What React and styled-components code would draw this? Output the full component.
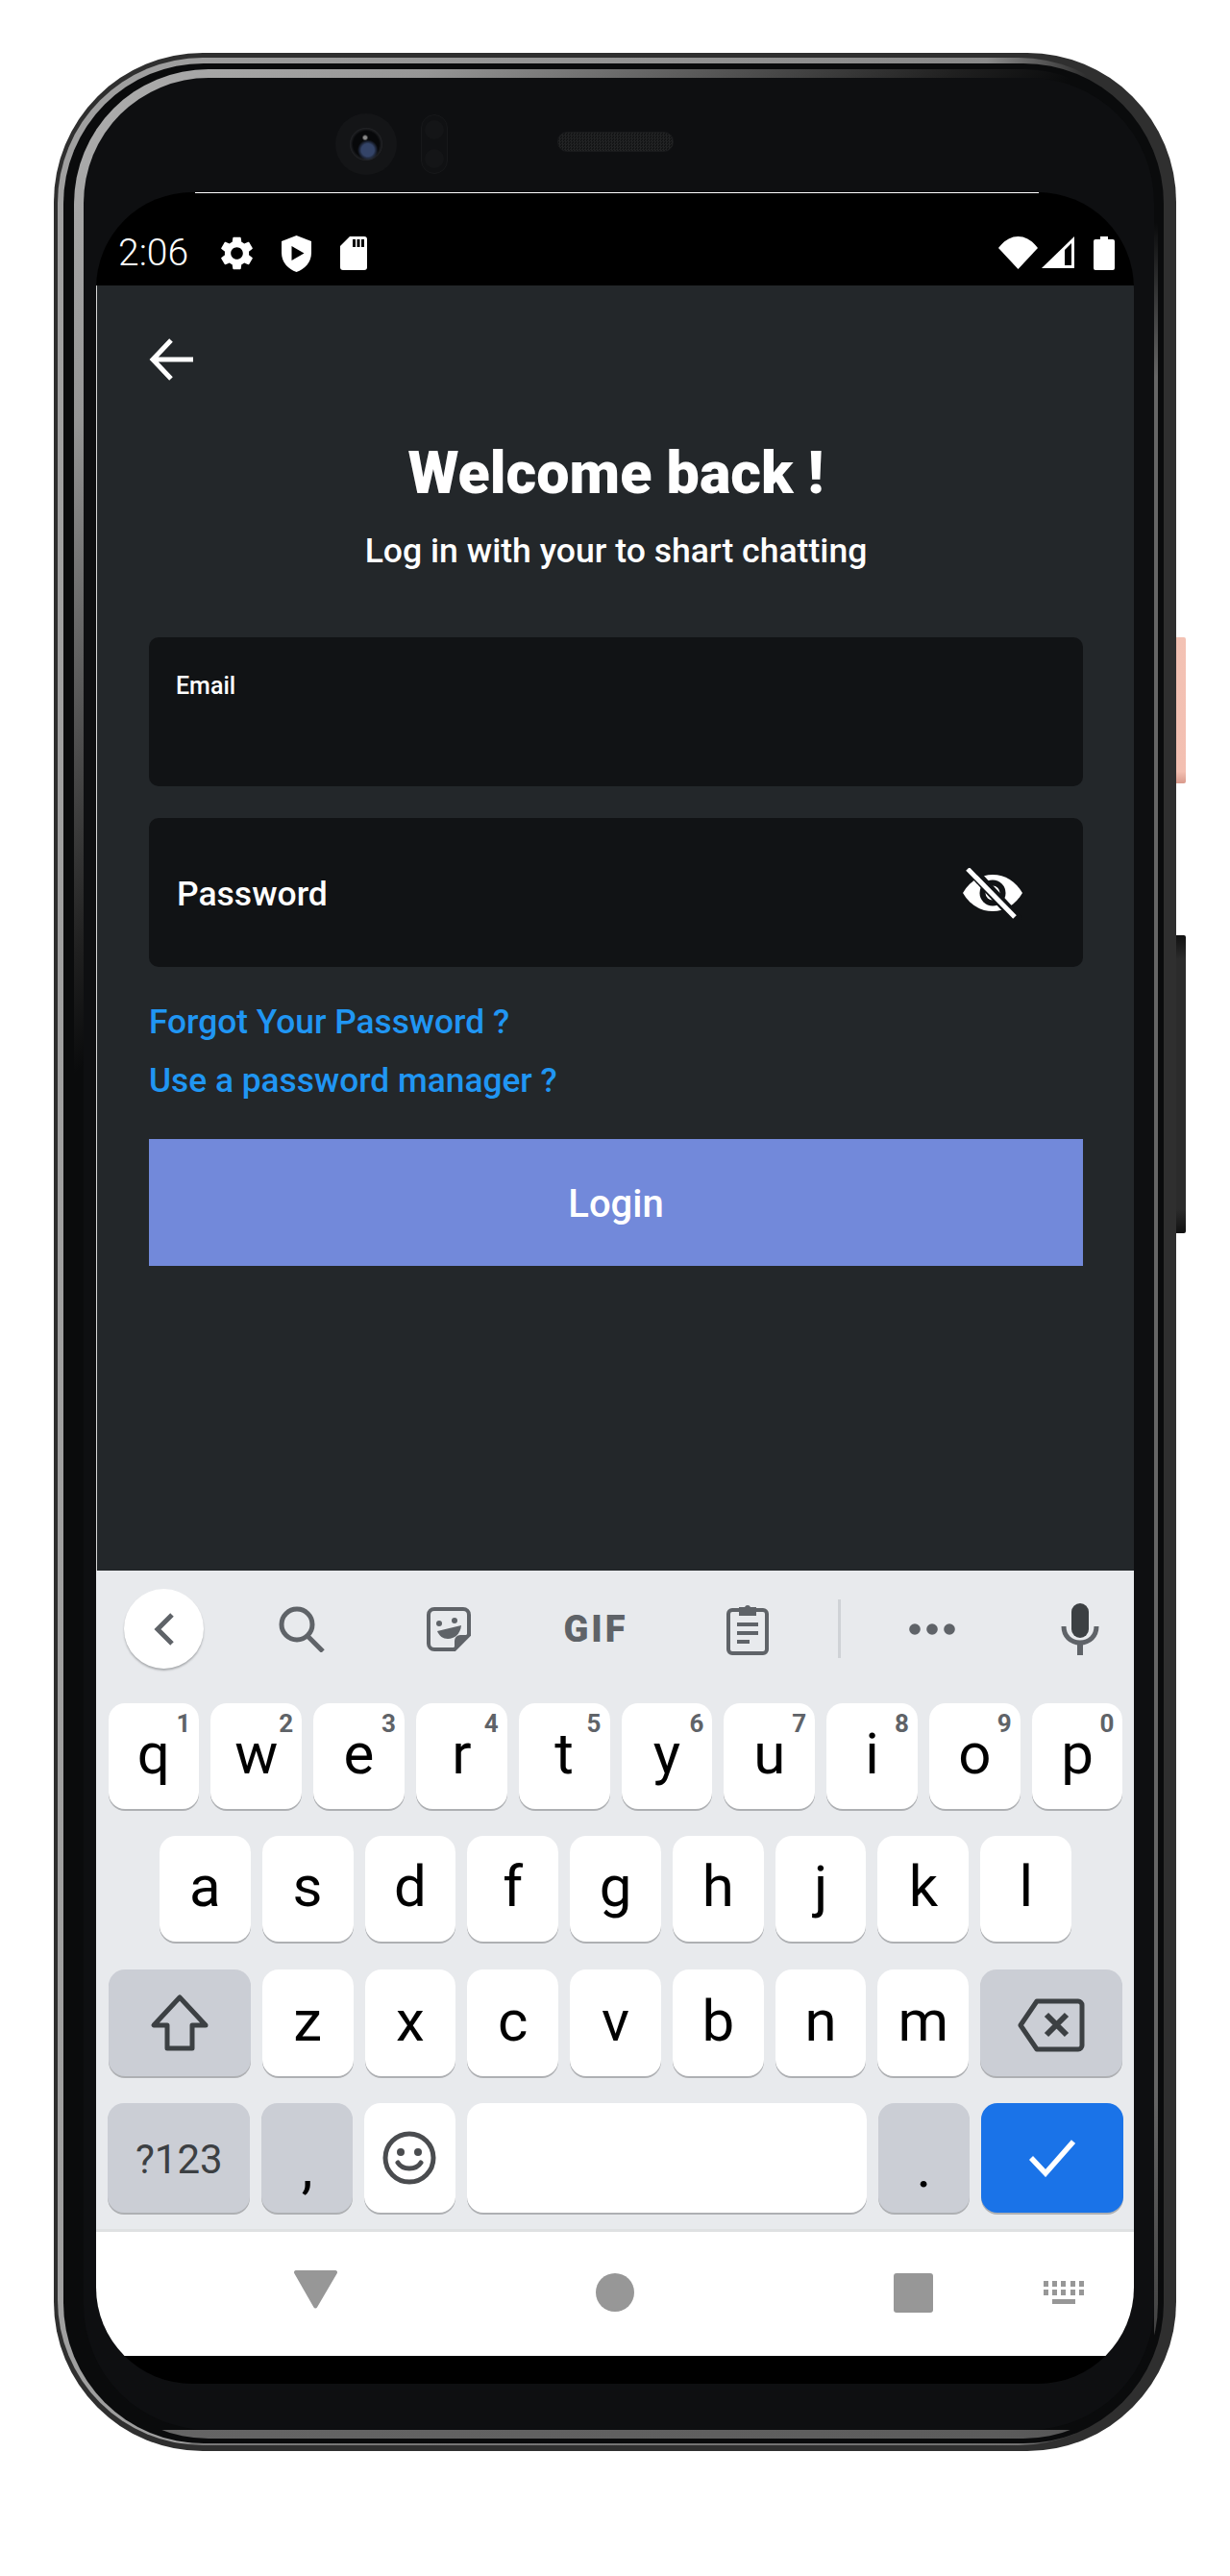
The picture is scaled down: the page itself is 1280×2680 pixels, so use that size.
import styled, { createGlobalStyle } from "styled-components";

const GlobalStyle = createGlobalStyle`
  html, body {
    margin: 0;
    padding: 0;
    background: #fff;
  }
  * {
    box-sizing: border-box;
  }
`;

const KEY_FONT = `Roboto, "Liberation Sans", sans-serif`;

const ROW_1 = [
  ["q", "1"], ["w", "2"], ["e", "3"], ["r", "4"], ["t", "5"],
  ["y", "6"], ["u", "7"], ["i", "8"], ["o", "9"], ["p", "0"],
];
const ROW_2 = ["a", "s", "d", "f", "g", "h", "j", "k", "l"];
const ROW_3 = ["z", "x", "c", "v", "b", "n", "m"];

function App() {
  return (
    <Page>
      <GlobalStyle />
      <Shell>
        <VolumeButton />
        <PowerButton />
        <LightRing>
          <DarkRing>
            <GlossRing>
              <Face>
                <Sensors>
                  <Camera>
                    <Lens />
                  </Camera>
                  <ProximityPill>
                    <ProximityDot />
                    <ProximityDot />
                  </ProximityPill>
                  <Speaker />
                </Sensors>
                <Screen>
                  <TopLine />
                  <StatusBar>
                    <Clock>2:06</Clock>
                    <StatusIcons>
                      <svg width="33" height="35" viewBox="2.7 2 18.6 20" fill="#fff">
                        <path d="M19.14 12.94c.04-.3.06-.61.06-.94 0-.32-.02-.64-.07-.94l2.03-1.58c.18-.14.23-.41.12-.61l-1.92-3.32c-.12-.22-.37-.29-.59-.22l-2.39.96c-.5-.38-1.03-.7-1.62-.94l-.36-2.54c-.04-.24-.24-.41-.48-.41h-3.84c-.24 0-.43.17-.47.41l-.36 2.54c-.59.24-1.13.57-1.62.94l-2.39-.96c-.22-.08-.47 0-.59.22L2.74 8.87c-.12.21-.08.47.12.61l2.03 1.58c-.05.3-.09.63-.09.94s.02.64.07.94l-2.03 1.58c-.18.14-.23.41-.12.61l1.92 3.32c.12.22.37.29.59.22l2.39-.96c.5.38 1.03.7 1.62.94l.36 2.54c.05.24.24.41.48.41h3.84c.24 0 .44-.17.47-.41l.36-2.54c.59-.24 1.13-.56 1.62-.94l2.39.96c.22.08.47 0 .59-.22l1.92-3.32c.12-.22.07-.47-.12-.61l-2.01-1.58zM12 15.6c-1.98 0-3.6-1.62-3.6-3.6s1.62-3.6 3.6-3.6 3.6 1.62 3.6 3.6-1.62 3.6-3.6 3.6z" />
                      </svg>
                      <svg width="31" height="38" viewBox="0 0 31 38">
                        <path fill="#fff" d="M15.5 0L31 6v12c0 10-7 17-15.5 20C7 35 0 28 0 18V6z" />
                        <path fill="#000" d="M10.5 11v15l13-7.5z" />
                      </svg>
                      <svg width="28" height="35" viewBox="0 0 28 35">
                        <path fill="#fff" d="M10 0h15a3 3 0 0 1 3 3v29a3 3 0 0 1-3 3H3a3 3 0 0 1-3-3V10z" />
                        <path fill="#000" d="M13 3h3v8h-3zM17.5 3h3v8h-3zM22 3h3v8h-3z" />
                      </svg>
                    </StatusIcons>
                    <SystemIcons>
                      <svg width="41" height="34" viewBox="0 0 41 34" fill="#fff">
                        <path d="M0 12C12-4 29-4 41 12L20.5 34z" />
                      </svg>
                      <svg width="34" height="33" viewBox="0 0 34 33">
                        <path fill="#fff" d="M34 0v33H0z" />
                        <path fill="#000" d="M24 14l7-7v23h-7z" />
                      </svg>
                      <svg width="22" height="35" viewBox="0 0 22 35" fill="#fff">
                        <path d="M7 0h8v3h5a2 2 0 0 1 2 2v28a2 2 0 0 1-2 2H2a2 2 0 0 1-2-2V5a2 2 0 0 1 2-2h5z" />
                      </svg>
                    </SystemIcons>
                  </StatusBar>

                  <Content>
                    <BackButton>
                      <svg width="46" height="46" viewBox="0 0 46 46" fill="none" stroke="#fff" strokeWidth="5">
                        <path d="M46 23H4M23 3L4 23l19 20" />
                      </svg>
                    </BackButton>
                    <Title>Welcome back !</Title>
                    <Subtitle>Log in with your to shart chatting</Subtitle>

                    <EmailField>
                      <FloatingLabel>Email</FloatingLabel>
                    </EmailField>
                    <PasswordField>
                      <Placeholder>Password</Placeholder>
                      <EyeIcon width="62" height="54" viewBox="0 0 62 54">
                        <path fill="#fff" d="M0 26C7 14 18 7 31 7s24 7 31 19c-7 12-18 19-31 19S7 38 0 26z" />
                        <circle cx="31" cy="26" r="13.5" fill="#111315" />
                        <circle cx="31" cy="26" r="7.5" fill="#fff" />
                        <path stroke="#111315" strokeWidth="11" d="M5-2l54 58" />
                        <path stroke="#fff" strokeWidth="5" d="M5 1l49 50" />
                      </EyeIcon>
                    </PasswordField>

                    <TextLink>Forgot Your Password ?</TextLink>
                    <TextLink $top={21}>Use a password manager ?</TextLink>
                    <LoginButton>Login</LoginButton>
                  </Content>

                  <Keyboard>
                    <Toolbar>
                      <ToolSlot>
                        <CollapseButton>
                          <svg width="22" height="34" viewBox="0 0 22 34" fill="none" stroke="#5f6368" strokeWidth="5">
                            <path d="M19 2L4 17l15 15" />
                          </svg>
                        </CollapseButton>
                      </ToolSlot>
                      <ToolSlot>
                        <svg width="48" height="48" viewBox="0 0 48 48" fill="none" stroke="#5f6368" strokeWidth="5">
                          <circle cx="19" cy="19" r="16" />
                          <path d="M30 31l16 16" />
                        </svg>
                      </ToolSlot>
                      <ToolSlot>
                        <svg width="46" height="46" viewBox="0 0 46 46" fill="none">
                          <path stroke="#5f6368" strokeWidth="4" d="M8 2h30a6 6 0 0 1 6 6v21L29 44H8a6 6 0 0 1-6-6V8a6 6 0 0 1 6-6z" />
                          <path fill="#5f6368" d="M44 29L29 44V35a6 6 0 0 1 6-6z" />
                          <circle cx="13" cy="17" r="3" fill="#5f6368" />
                          <circle cx="29" cy="14" r="3" fill="#5f6368" />
                          <path fill="#5f6368" d="M11 25l25-6c-1 9-7 14-14 14-5 0-9-3-11-8z" />
                        </svg>
                      </ToolSlot>
                      <ToolSlot>
                        <GifLabel>GIF</GifLabel>
                      </ToolSlot>
                      <ToolSlot>
                        <svg width="44" height="54" viewBox="0 0 44 54" fill="none">
                          <path stroke="#5f6368" strokeWidth="4" d="M13 7H6a4 4 0 0 0-4 4v37a4 4 0 0 0 4 4h32a4 4 0 0 0 4-4V11a4 4 0 0 0-4-4h-7" />
                          <path fill="#5f6368" d="M13 4h6a3.2 3.2 0 0 1 6 0h6v9H13z" />
                          <path stroke="#5f6368" strokeWidth="4" d="M11 22h22M11 31h22M11 40h13" />
                        </svg>
                      </ToolSlot>
                      <ToolSlot>
                        <ToolDivider />
                      </ToolSlot>
                      <ToolSlot>
                        <svg width="48" height="12" viewBox="0 0 48 12" fill="#5f6368">
                          <circle cx="6" cy="6" r="5.8" />
                          <circle cx="24" cy="6" r="5.8" />
                          <circle cx="42" cy="6" r="5.8" />
                        </svg>
                      </ToolSlot>
                      <MicSlot>
                        <svg width="40" height="54" viewBox="0 0 40 54" fill="#3c4043">
                          <rect x="11" y="0" width="18" height="36" rx="9" />
                          <path fill="none" stroke="#5f6368" strokeWidth="5" d="M3 24c0 10 7 17 17 17s17-7 17-17" />
                          <rect x="17" y="40" width="6" height="14" fill="#5f6368" />
                        </svg>
                      </MicSlot>
                    </Toolbar>

                    <KeyRow $height={110} $mb={28}>
                      {ROW_1.map(([letter, hint]) => (
                        <Key key={letter}>
                          {letter}
                          <KeyHint>{hint}</KeyHint>
                        </Key>
                      ))}
                    </KeyRow>
                    <KeyRow $height={110} $mb={29}>
                      {ROW_2.map((letter) => (
                        <Key key={letter}>{letter}</Key>
                      ))}
                    </KeyRow>
                    <KeyRow $height={111} $mb={28}>
                      <WideKey $grey>
                        <svg width="62" height="62" viewBox="0 0 62 62" fill="none" stroke="#3c4043" strokeWidth="5" strokeLinejoin="round">
                          <path d="M31 4L4 33h14v24h26V33h14z" />
                        </svg>
                      </WideKey>
                      {ROW_3.map((letter) => (
                        <Key key={letter}>{letter}</Key>
                      ))}
                      <WideKey $grey $pad={5}>
                        <svg width="70" height="56" viewBox="0 0 70 56" fill="none" stroke="#3c4043" strokeWidth="5" strokeLinejoin="round">
                          <path d="M20 3h43a4 4 0 0 1 4 4v42a4 4 0 0 1-4 4H20L3 28z" />
                          <path d="M30 17l21 21M51 17L30 38" strokeWidth="6" />
                        </svg>
                      </WideKey>
                    </KeyRow>
                    <KeyRow $height={114} $mb={0}>
                      <WideKey $grey $pad={2}>?123</WideKey>
                      <Key $grey $low>,</Key>
                      <Key $plain>
                        <svg width="56" height="56" viewBox="0 0 56 56" fill="none" stroke="#4a4c4f" strokeWidth="5">
                          <circle cx="28" cy="28" r="25" />
                          <circle cx="19" cy="22" r="4" fill="#4a4c4f" stroke="none" />
                          <circle cx="37" cy="22" r="4" fill="#4a4c4f" stroke="none" />
                          <path d="M16 33c5 8 19 8 24 0" strokeLinecap="round" />
                        </svg>
                      </Key>
                      <SpaceKey />
                      <Key $grey $low>.</Key>
                      <EnterKey>
                        <svg width="48" height="40" viewBox="0 0 48 40" fill="none" stroke="#fff" strokeWidth="5.5">
                          <path d="M2 20l15 16L46 3" />
                        </svg>
                      </EnterKey>
                    </KeyRow>
                  </Keyboard>

                  <NavBar>
                    <NavItem $left={206} $lift={6}>
                      <svg width="45" height="40" viewBox="0 0 45 40" fill="#979797">
                        <path d="M2 0h41a2 2 0 0 1 1.8 2.9L24 38.5a2 2 0 0 1-3.5 0L.2 2.9A2 2 0 0 1 2 0z" />
                      </svg>
                    </NavItem>
                    <NavItem $left={269}>
                      <HomeDot />
                    </NavItem>
                    <NavItem $left={270}>
                      <RecentSquare />
                    </NavItem>
                    <NavItem $left={115}>
                      <svg width="42" height="24" viewBox="0 0 42 24" fill="#979797">
                        <path d="M0 0h5v6H0zM9 0h5v6H9zM18 0h5v6h-5zM28 0h5v6h-5zM37 0h5v6h-5zM0 9h5v6H0zM9 9h5v6H9zM18 9h5v6h-5zM28 9h5v6h-5zM37 9h5v6h-5zM9 19h24v5H9z" />
                      </svg>
                    </NavItem>
                  </NavBar>
                </Screen>
              </Face>
            </GlossRing>
          </DarkRing>
        </LightRing>
      </Shell>
    </Page>
  );
}

export default App;

const Page = styled.div`
  width: 1280px;
  height: 2680px;
  padding: 55px 56px 0;
  background: #fff;
`;

const Shell = styled.div`
  position: relative;
  width: 1168px;
  height: 2495px;
  padding: 5px 13px 6px 4px;
  border-radius: 155px;
  background: #2f2f2f;
`;

const VolumeButton = styled.div`
  position: absolute;
  right: -10px;
  top: 608px;
  width: 10px;
  height: 152px;
  border-radius: 0 2px 2px 0;
  background: linear-gradient(#f3c2b4 0, #f3bfb1 92%, #d99a8c 100%);
`;

const PowerButton = styled.div`
  position: absolute;
  right: -10px;
  top: 918px;
  width: 10px;
  height: 310px;
  border-radius: 0 2px 2px 0;
  background: linear-gradient(#111 0, #2b2b2b 8%, #2b2b2b 92%, #111 100%);
`;

const LightRing = styled.div`
  height: 100%;
  padding: 6px 0 2px 6px;
  border-radius: 151px;
  background:
    linear-gradient(90deg, #7a7a7a 0, #6f6f6f 100%) bottom / 100% 2px no-repeat,
    linear-gradient(90deg, #a0a0a0 0, #949494 50%, #8a8a8a 84%, #2f2f2f 93%);
`;

const DarkRing = styled.div`
  height: 100%;
  padding: 6px 6px 5px 11px;
  border-radius: 146px;
  background: #0a0b0c;
`;

const GlossRing = styled.div`
  height: 100%;
  padding: 9px 4px 9px 10px;
  border-radius: 140px;
  background:
    linear-gradient(90deg, #666 0, #5c5c5c 85%, #505050 100%) bottom / 100% 9px no-repeat,
    linear-gradient(180deg, transparent 160px, #666 320px, #666 2100px, #333 100%) right / 4px 100% no-repeat,
    linear-gradient(135deg, #b0b0b0 0, #969696 260px, #5a5a5a 460px, #202020 650px, #0a0b0c 740px);
`;

const Face = styled.div`
  height: 100%;
  padding: 0 21px 48px 13px;
  border-radius: 130px;
  background: #0e0f11;
  display: flex;
  flex-direction: column;
`;

const Sensors = styled.div`
  height: 119px;
  padding: 19px 0 0 249px;
  display: flex;
  align-items: center;
  flex-shrink: 0;
`;

const Camera = styled.div`
  width: 64px;
  height: 64px;
  border-radius: 50%;
  background: #141517;
  display: flex;
  align-items: center;
  justify-content: center;
`;

const Lens = styled.div`
  width: 34px;
  height: 34px;
  border-radius: 50%;
  background:
    radial-gradient(circle at 47% 30%, #8a8a8a 0, #8a8a8a 5%, transparent 11%),
    radial-gradient(circle at 55% 68%, #344468 0, #344468 22%, transparent 36%),
    radial-gradient(circle, #07080a 0, #07080a 56%, #232427 70%, #232427 100%);
`;

const ProximityPill = styled.div`
  width: 28px;
  height: 62px;
  margin-left: 25px;
  border: 1px solid #17181a;
  border-radius: 14px;
  background: #101113;
  display: flex;
  flex-direction: column;
  align-items: center;
  justify-content: space-around;
`;

const ProximityDot = styled.div`
  width: 20px;
  height: 20px;
  border-radius: 50%;
  background: #141517;
`;

const Speaker = styled.div`
  width: 121px;
  height: 21px;
  margin: 0 0 5px 114px;
  border-radius: 10px;
  border: 1px solid #191a1c;
  background: repeating-conic-gradient(#222324 0 25%, #131415 0 50%) 0 0 / 3px 3px;
`;

const Screen = styled.div`
  flex: 1;
  min-height: 0;
  padding-bottom: 29px;
  border-radius: 100px;
  background: #000;
  overflow: hidden;
  display: flex;
  flex-direction: column;
`;

const TopLine = styled.div`
  height: 1px;
  margin: 0 99px 0 103px;
  background: #fff;
  flex-shrink: 0;
`;

const StatusBar = styled.div`
  height: 96px;
  flex-shrink: 0;
  padding: 31px 20px 0 24px;
  display: flex;
  align-items: center;
  color: #fff;
`;

const Clock = styled.div`
  width: 107px;
  margin-left: -1px;
  font: 300 39px/1 ${KEY_FONT};
  padding-bottom: 2px;
`;

const StatusIcons = styled.div`
  display: flex;
  align-items: center;
  gap: 30px;
  margin-bottom: 2px;
`;

const SystemIcons = styled.div`
  margin-left: auto;
  display: flex;
  align-items: flex-start;
  gap: 4px;
  margin-bottom: 3px;

  svg:last-child {
    margin-left: 16px;
  }
`;

const Content = styled.div`
  flex: 1;
  min-height: 0;
  padding: 54px 53px 0 54px;
  background: #23272a;
  border-left: 1px solid #d8d8d8;
  font-family: Roboto, "Liberation Sans", sans-serif;
  color: #fff;
  display: flex;
  flex-direction: column;

  & > * {
    flex-shrink: 0;
  }
`;

const BackButton = styled.div`
  height: 44px;
  margin-bottom: 67px;
  line-height: 0;
`;

const Title = styled.h1`
  margin: 0;
  font-size: 61px;
  line-height: 60px;
  font-weight: 900;
  text-align: center;
`;

const Subtitle = styled.p`
  margin: 31px 0 70px;
  font-size: 35.6px;
  line-height: 40px;
  font-weight: 500;
  text-align: center;
`;

const EmailField = styled.div`
  height: 155px;
  padding: 36px 28px 0;
  border-radius: 10px;
  background: #111315;
`;

const FloatingLabel = styled.div`
  font-size: 25px;
  line-height: 30px;
  font-weight: 500;
`;

const PasswordField = styled.div`
  height: 155px;
  margin: 33px 0 35px;
  padding: 3px 63px 0 29px;
  border-radius: 10px;
  background: #111315;
  display: flex;
  align-items: center;
  justify-content: space-between;
`;

const EyeIcon = styled.svg`
  margin-top: -1px;
`;

const Placeholder = styled.div`
  font-size: 35.5px;
  line-height: 40px;
  font-weight: 500;
`;

const TextLink = styled.div`
  position: relative;
  top: 2px;
  margin-top: ${(props) => props.$top || 0}px;
  font-size: 35.3px;
  line-height: 40px;
  font-weight: 500;
  color: #2096f3;
`;

const LoginButton = styled.div`
  height: 132px;
  margin-top: 43px;
  padding-top: 2px;
  background: #7289da;
  font-size: 40px;
  font-weight: 500;
  display: flex;
  align-items: center;
  justify-content: center;
`;

const Keyboard = styled.div`
  height: 685px;
  flex-shrink: 0;
  padding: 0 0 15px 1px;
  background: #e8eaed;
  font-family: ${KEY_FONT};
  display: flex;
  flex-direction: column;
`;

const Toolbar = styled.div`
  height: 138px;
  flex-shrink: 0;
  display: grid;
  grid-template-columns: 139px 148px 158px 148px 167px 25px 168px 1fr;
`;

const ToolSlot = styled.div`
  height: 121px;
  display: flex;
  align-items: center;
  justify-content: center;
`;

const MicSlot = styled(ToolSlot)`
  padding-left: 14px;
`;

const CollapseButton = styled.div`
  width: 83px;
  height: 83px;
  border-radius: 50%;
  background: #fff;
  box-shadow: 0 2px 2px rgba(60, 64, 67, 0.35);
  display: flex;
  align-items: center;
  justify-content: center;
`;

const GifLabel = styled.span`
  font: 900 38px/1 ${KEY_FONT};
  letter-spacing: 3px;
  color: #5f6368;
`;

const ToolDivider = styled.div`
  width: 3px;
  height: 61px;
  background: #cfd2d6;
`;

const KeyRow = styled.div`
  height: ${(props) => props.$height}px;
  margin-bottom: ${(props) => props.$mb}px;
  flex-shrink: 0;
  display: flex;
  justify-content: center;
  gap: 12px;
`;

const KeyBase = styled.div`
  position: relative;
  height: 100%;
  border-radius: 17px;
  background: ${(props) => (props.$grey ? "#cbced5" : "#fff")};
  box-shadow: 0 2px 0 #aeb0b3;
  color: #000;
  display: flex;
  align-items: center;
  justify-content: center;
`;

const Key = styled(KeyBase)`
  width: 94.8px;
  font-size: 60px;
  line-height: 1;
  padding-top: ${(props) => (props.$low ? 19 : 0)}px;
  padding-bottom: ${(props) => (props.$low || props.$plain ? 0 : 4)}px;
`;

const KeyHint = styled.span`
  position: absolute;
  top: 6px;
  right: 9px;
  font-size: 26px;
  line-height: 30px;
  font-weight: 700;
  color: #5f6368;
`;

const WideKey = styled(KeyBase)`
  width: 148px;
  padding-top: ${(props) => props.$pad || 0}px;
  font-size: 42px;
  color: #3c4043;
`;

const SpaceKey = styled(KeyBase)`
  width: 416px;
`;

const EnterKey = styled(KeyBase)`
  width: 148px;
  background: #1a73e8;
`;

const NavBar = styled.div`
  height: 132px;
  flex-shrink: 0;
  border-top: 3px solid #dfe1e2;
  background: #fff;
  display: flex;
  align-items: flex-start;
`;

const NavItem = styled.div`
  margin-left: ${(props) => props.$left}px;
  height: 126px;
  padding-bottom: ${(props) => props.$lift || 0}px;
  line-height: 0;
  display: flex;
  align-items: center;
`;

const HomeDot = styled.div`
  width: 40px;
  height: 40px;
  border-radius: 50%;
  background: #979797;
`;

const RecentSquare = styled.div`
  width: 41px;
  height: 41px;
  border-radius: 3px;
  background: #979797;
`;
